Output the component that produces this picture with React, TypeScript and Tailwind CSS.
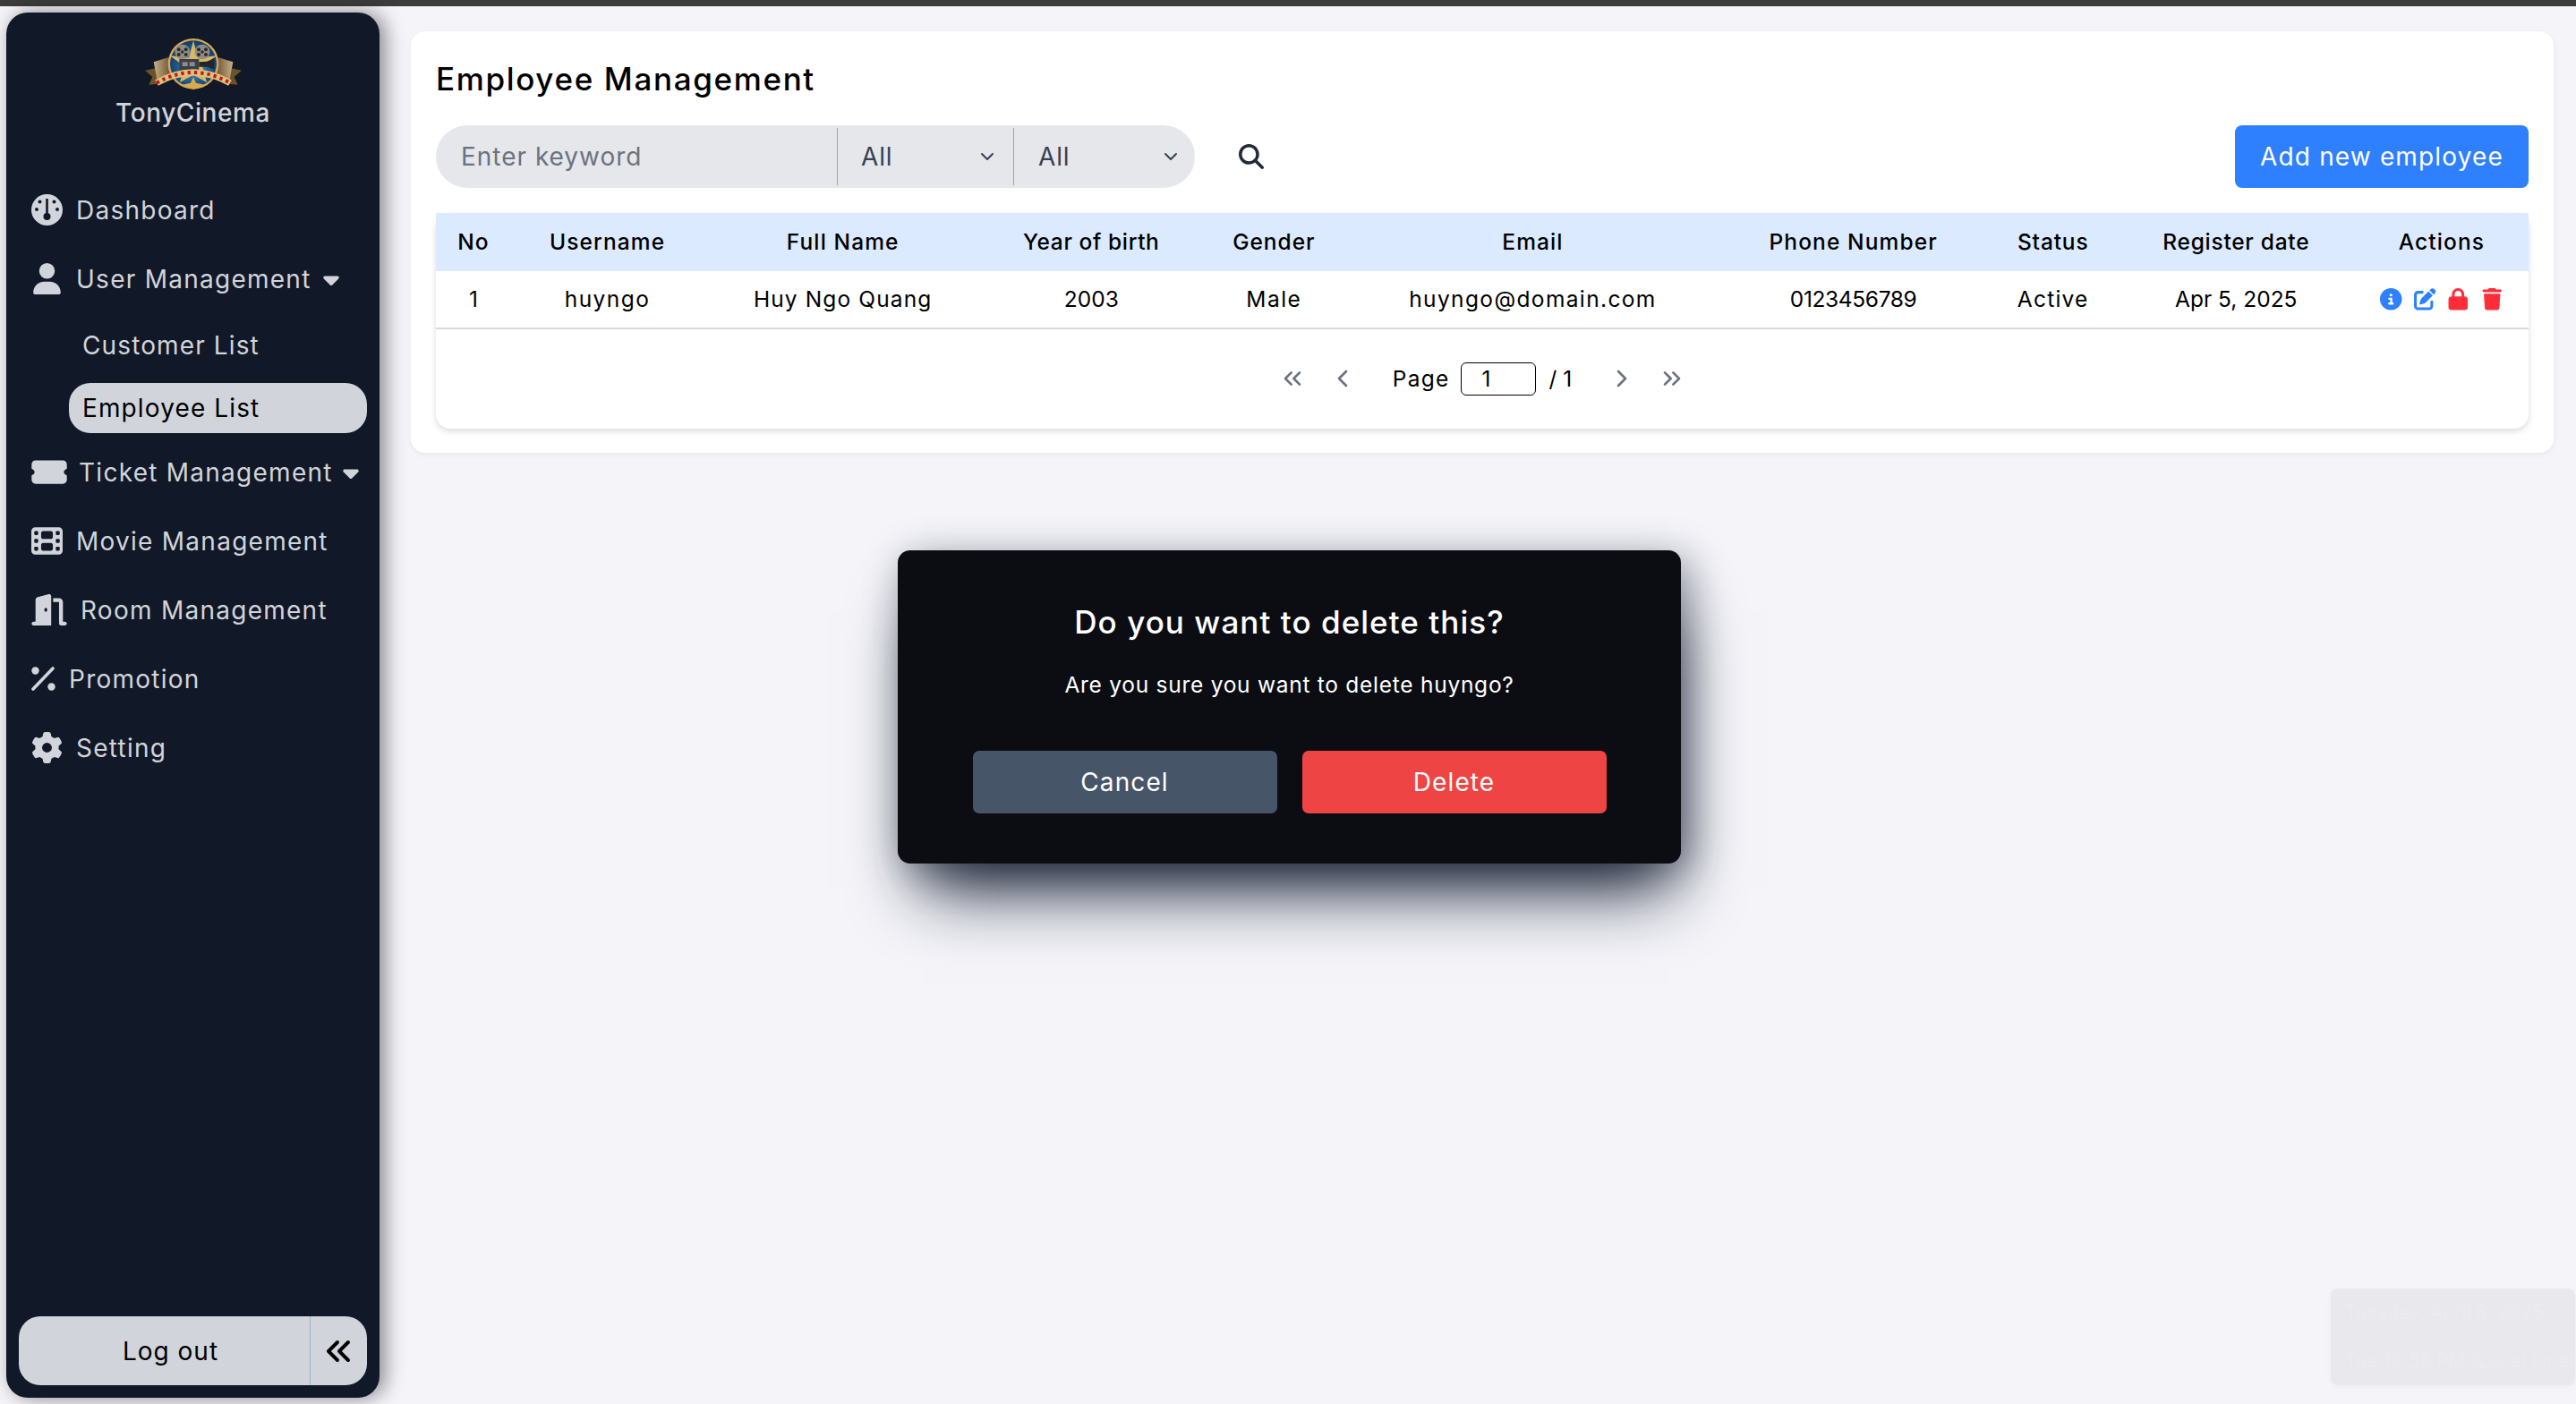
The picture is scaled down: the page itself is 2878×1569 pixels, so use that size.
import React from "react";
import { FaUser, FaTicketSimple, FaFilm, FaDoorOpen, FaGear, FaCaretDown, FaAnglesLeft, FaMagnifyingGlass, FaCircleInfo, FaPenToSquare, FaLock, FaTrash } from "react-icons/fa6";
import { ChevronDown, ChevronLeft, ChevronRight, ChevronsLeft, ChevronsRight } from "lucide-react";

function Logo() {
  return (
    <svg width="110" height="60" viewBox="90 40 330 180">
      <defs>
        <radialGradient id="blue" cx="50%" cy="55%" r="55%">
          <stop offset="0%" stopColor="#5ea6d6" />
          <stop offset="60%" stopColor="#1f5c92" />
          <stop offset="100%" stopColor="#123a63" />
        </radialGradient>
        <linearGradient id="tan" x1="0" y1="0" x2="1" y2="0">
          <stop offset="0%" stopColor="#c9b08a" />
          <stop offset="100%" stopColor="#6d5433" />
        </linearGradient>
        <linearGradient id="tan2" x1="1" y1="0" x2="0" y2="0">
          <stop offset="0%" stopColor="#c9b08a" />
          <stop offset="100%" stopColor="#6d5433" />
        </linearGradient>
      </defs>
      <polygon points="93,150 135,141 138,195 106,198 118,172" fill="#6b5228" />
      <polygon points="417,150 375,141 372,195 404,198 392,172" fill="#6b5228" />
      <polygon points="122,122 172,106 178,172 134,184" fill="url(#tan)" />
      <polygon points="388,122 338,106 332,172 376,184" fill="url(#tan2)" />
      <circle cx="255" cy="128" r="85" fill="#d8a95a" />
      <circle cx="255" cy="128" r="78" fill="url(#blue)" />
      <polygon points="255,50 270,108 335,100 285,135 300,190 255,165 210,190 225,135 175,100 240,108" fill="#d9b765" />
      <circle cx="218" cy="88" r="25" fill="#8f8c86" />
      <circle cx="285" cy="88" r="25" fill="#8f8c86" />
      <g fill="#2a2a2a">
        <circle cx="218" cy="88" r="5" /><circle cx="206" cy="80" r="6" /><circle cx="230" cy="80" r="6" /><circle cx="206" cy="97" r="6" /><circle cx="230" cy="97" r="6" />
        <circle cx="285" cy="88" r="5" /><circle cx="273" cy="80" r="6" /><circle cx="297" cy="80" r="6" /><circle cx="273" cy="97" r="6" /><circle cx="297" cy="97" r="6" />
      </g>
      <rect x="208" y="112" width="66" height="40" fill="#3d3f43" />
      <rect x="218" y="122" width="18" height="14" fill="#8a8d92" />
      <rect x="242" y="122" width="18" height="14" fill="#8a8d92" />
      <polygon points="274,122 300,120 325,110 325,146 300,138 274,138" fill="#22252a" />
      <path d="M132 192 Q255 122 378 192" fill="none" stroke="#d9c27a" strokeWidth="22" />
      <path d="M132 192 Q255 122 378 192" fill="none" stroke="#c9141b" strokeWidth="12" strokeDasharray="10 12" />
      <polygon points="255,172 264,192 292,198 270,207 255,214 240,207 218,198 246,192" fill="#d9a94e" />
    </svg>
  );
}

function Gauge() {
  return (
    <svg width="35" height="35" viewBox="0 0 35 35">
      <circle cx="17.5" cy="17.5" r="17.5" fill="#d1d5db" />
      <g fill="#111827">
        <rect x="16.2" y="5" width="2.6" height="18" />
        <circle cx="17.5" cy="25" r="4" />
        <circle cx="9.5" cy="8.5" r="2" />
        <circle cx="25.5" cy="8.5" r="2" />
        <circle cx="6" cy="17" r="2" />
        <circle cx="29" cy="17" r="2" />
      </g>
    </svg>
  );
}

function Percent() {
  return (
    <svg width="27" height="27" viewBox="0 0 27 27">
      <line x1="2" y1="25" x2="24" y2="2" stroke="#d1d5db" strokeWidth="3.6" strokeLinecap="round" />
      <circle cx="4.5" cy="4.5" r="4.2" fill="#d1d5db" />
      <circle cx="22.5" cy="22.5" r="4.2" fill="#d1d5db" />
    </svg>
  );
}

function NavRow({ icon, label, caret, gap }: { icon: React.ReactNode; label: string; caret?: boolean; gap: string }) {
  return (
    <div className={`flex h-[77px] items-center pl-[28px] text-[28px] tracking-[0.045em] text-[#d1d5db] ${gap}`}>
      {icon}
      <span>{label}</span>
      {caret && <FaCaretDown className="ml-[-4px] h-[28px] w-[22px]" />}
    </div>
  );
}

const columns = [
  { w: "w-[84px]", h: "No", v: "1", t: "", ht: "tracking-[0.045em]" },
  { w: "w-[215px]", h: "Username", v: "huyngo", t: "tracking-[0.06em]", ht: "tracking-[0.045em]" },
  { w: "w-[311px]", h: "Full Name", v: "Huy Ngo Quang", t: "tracking-[0.046em]", ht: "tracking-[0.045em]" },
  { w: "w-[244px]", h: "Year of birth", v: "2003", t: "", ht: "tracking-[0.025em]" },
  { w: "w-[164px]", h: "Gender", v: "Male", t: "tracking-[0.06em]", ht: "tracking-[0.04em]" },
  { w: "w-[414px]", h: "Email", v: "huyngo@domain.com", t: "tracking-[0.056em]", ht: "tracking-[0.045em]" },
  { w: "w-[302px]", h: "Phone Number", v: "0123456789", t: "tracking-[-0.015em]", ht: "tracking-[0.045em]" },
  { w: "w-[144px]", h: "Status", v: "Active", t: "tracking-[0.05em]", ht: "tracking-[0.035em]" },
  { w: "w-[265px]", h: "Register date", v: "Apr 5, 2025", t: "", ht: "tracking-[0.03em]" },
  { w: "w-[194px]", h: "Actions", v: "", t: "", ht: "tracking-[0.045em]" },
];

export default function App() {
  return (
    <div className="relative flex h-[1569px] w-full flex-col overflow-hidden bg-[#f4f4f9] text-black [font-family:Inter,'Liberation_Sans',sans-serif]">
      <div className="h-[7px] shrink-0 bg-[#3c3c3c]" />
      <div className="flex min-h-0 flex-1">
        <aside className="mb-[7px] ml-[7px] mt-[7px] flex w-[417px] shrink-0 flex-col rounded-[24px] bg-[#111827] shadow-[6px_0_22px_rgba(0,0,0,0.45)]">
          <div className="flex h-[182px] shrink-0 flex-col items-center pt-[28px]">
            <Logo />
            <div className="mt-[4px] text-[28px] font-medium leading-[40px] tracking-[0.02em] text-[#d1d5db]">TonyCinema</div>
          </div>
          <NavRow icon={<Gauge />} label="Dashboard" gap="gap-[15px]" />
          <NavRow icon={<FaUser className="h-[35px] w-[35px]" />} label="User Management" caret gap="gap-[15px]" />
          <div className="flex flex-col gap-[14px] pb-[5px] pl-[70px] pr-[14px] pt-[8px] text-[28px] tracking-[0.04em]">
            <div className="flex h-[56px] items-center pl-[15px] text-[#d1d5db]">Customer List</div>
            <div className="flex h-[56px] items-center rounded-[24px] bg-[#d1d5db] pl-[15px] text-black">Employee List</div>
          </div>
          <NavRow icon={<FaTicketSimple className="h-[35px] w-[40px]" />} label="Ticket Management" caret gap="gap-[13px]" />
          <NavRow icon={<FaFilm className="h-[35px] w-[35px]" />} label="Movie Management" gap="gap-[15px]" />
          <NavRow icon={<FaDoorOpen className="h-[35px] w-[40px]" />} label="Room Management" gap="gap-[15px]" />
          <NavRow icon={<Percent />} label="Promotion" gap="gap-[15px]" />
          <NavRow icon={<FaGear className="h-[35px] w-[35px]" />} label="Setting" gap="gap-[15px]" />
          <div className="mx-[14px] mb-[14px] mt-auto flex h-[77px] shrink-0 rounded-[24px] bg-[#d1d5db] text-[28px] tracking-[0.036em]">
            <div className="flex w-[326px] items-center justify-center border-r border-[#9fb0cc] pl-[14px]">Log out</div>
            <div className="flex flex-1 items-center justify-center"><FaAnglesLeft className="h-[32px] w-[32px]" /></div>
          </div>
        </aside>
        <main className="min-w-0 flex-1 pl-[35px] pr-[25px] pt-[28px]">
          <section className="h-[471px] rounded-[16px] bg-white px-[28px] shadow-[0_2px_6px_rgba(0,0,0,0.06)]">
            <h1 className="flex h-[105px] items-center pt-[2px] text-[35px] font-medium tracking-[0.047em]">Employee Management</h1>
            <div className="flex items-center justify-between">
              <div className="flex items-center">
                <div className="flex h-[70px] w-[848px] items-center rounded-[35px] bg-[#e5e7eb] text-[28px]">
                  <div className="w-[448px] pl-[28px] tracking-[0.035em] text-[#6b7280]">Enter keyword</div>
                  <div className="flex h-[64px] w-[197px] items-center justify-between border-l border-[#9ca3af] pl-[26px] pr-[17px] tracking-[0.03em] text-[#374151]">
                    All <ChevronDown className="h-[24px] w-[24px]" />
                  </div>
                  <div className="flex h-[64px] flex-1 items-center justify-between border-l border-[#9ca3af] pl-[27px] pr-[15px] tracking-[0.03em] text-[#374151]">
                    All <ChevronDown className="h-[24px] w-[24px]" />
                  </div>
                </div>
                <FaMagnifyingGlass className="ml-[49px] h-[28px] w-[28px] text-[#1f2937]" />
              </div>
              <button className="h-[70px] w-[328px] rounded-[8px] bg-[#2f80ff] text-[28px] tracking-[0.041em] text-white">Add new employee</button>
            </div>
            <div className="mt-[28px] h-[241px] rounded-[16px] bg-white shadow-[0_3px_7px_rgba(0,0,0,0.14)]">
              <table className="w-full table-fixed border-collapse text-center text-[24.5px]">
                <thead>
                  <tr className="h-[65px] bg-[#dbeafe]">
                    {columns.map((c) => (
                      <th key={c.h} className={`${c.w} ${c.ht} font-medium`}>{c.h}</th>
                    ))}
                  </tr>
                </thead>
                <tbody>
                  <tr className="h-[64px] border-b-2 border-[#d8d9e0]">
                    {columns.map((c) => (
                      <td key={c.h} className={c.t}>
                        {c.h === "Actions" ? (
                          <div className="flex items-center justify-center gap-[13px] text-[24.5px]">
                            <FaCircleInfo className="text-[#2f80ff]" />
                            <FaPenToSquare className="text-[#2f80ff]" />
                            <FaLock className="text-[#ff2d3a]" />
                            <FaTrash className="text-[#ff2d3a]" />
                          </div>
                        ) : (
                          c.v
                        )}
                      </td>
                    ))}
                  </tr>
                </tbody>
              </table>
              <div className="flex h-[110px] items-center justify-center text-[24.5px]">
                <ChevronsLeft className="h-[32px] w-[32px] text-[#6b7280]" strokeWidth={2} />
                <ChevronLeft className="ml-[24px] h-[32px] w-[32px] text-[#6b7280]" strokeWidth={2} />
                <span className="ml-[40px] tracking-[0.05em]">Page</span>
                <div className="ml-[13px] flex h-[37px] w-[84px] items-center rounded-[6px] border border-black pl-[22px] text-[24.5px]">1</div>
                <span className="ml-[14px]">/ 1</span>
                <ChevronRight className="ml-[40px] h-[32px] w-[32px] text-[#6b7280]" strokeWidth={2} />
                <ChevronsRight className="ml-[24px] h-[32px] w-[32px] text-[#6b7280]" strokeWidth={2} />
              </div>
            </div>
          </section>
        </main>
      </div>

      <div className="absolute left-[1003px] top-[615px] flex h-[350px] w-[875px] flex-col items-center rounded-[14px] bg-[#0b0d13] pt-[58px] text-white shadow-[8px_48px_72px_-20px_rgba(15,23,42,0.95),8px_8px_44px_rgba(15,23,42,0.4)]">
        <h2 className="text-[35px] font-medium leading-[44px] tracking-[0.03em]">Do you want to delete this?</h2>
        <p className="mt-[30px] text-[24.5px] leading-[36px] tracking-[0.03em]">Are you sure you want to delete huyngo?</p>
        <div className="mt-[56px] flex gap-[28px] text-[28px] tracking-[0.04em]">
          <button className="h-[70px] w-[340px] rounded-[7px] bg-[#475569]">Cancel</button>
          <button className="h-[70px] w-[340px] rounded-[7px] bg-[#ef4444]">Delete</button>
        </div>
      </div>

      <div className="absolute bottom-[21px] right-[1px] flex h-[108px] w-[273px] flex-col justify-between rounded-[8px] bg-[#e8e8ed] px-[16px] py-[12px] text-[21px] leading-[30px] text-[#ebebf0] shadow-[0_3px_8px_rgba(0,0,0,0.03)]">
        <div>Tuesday, April 8, 2025</div>
        <div className="whitespace-nowrap">Tue 10:56 PM (Local time)</div>
      </div>
    </div>
  );
}
